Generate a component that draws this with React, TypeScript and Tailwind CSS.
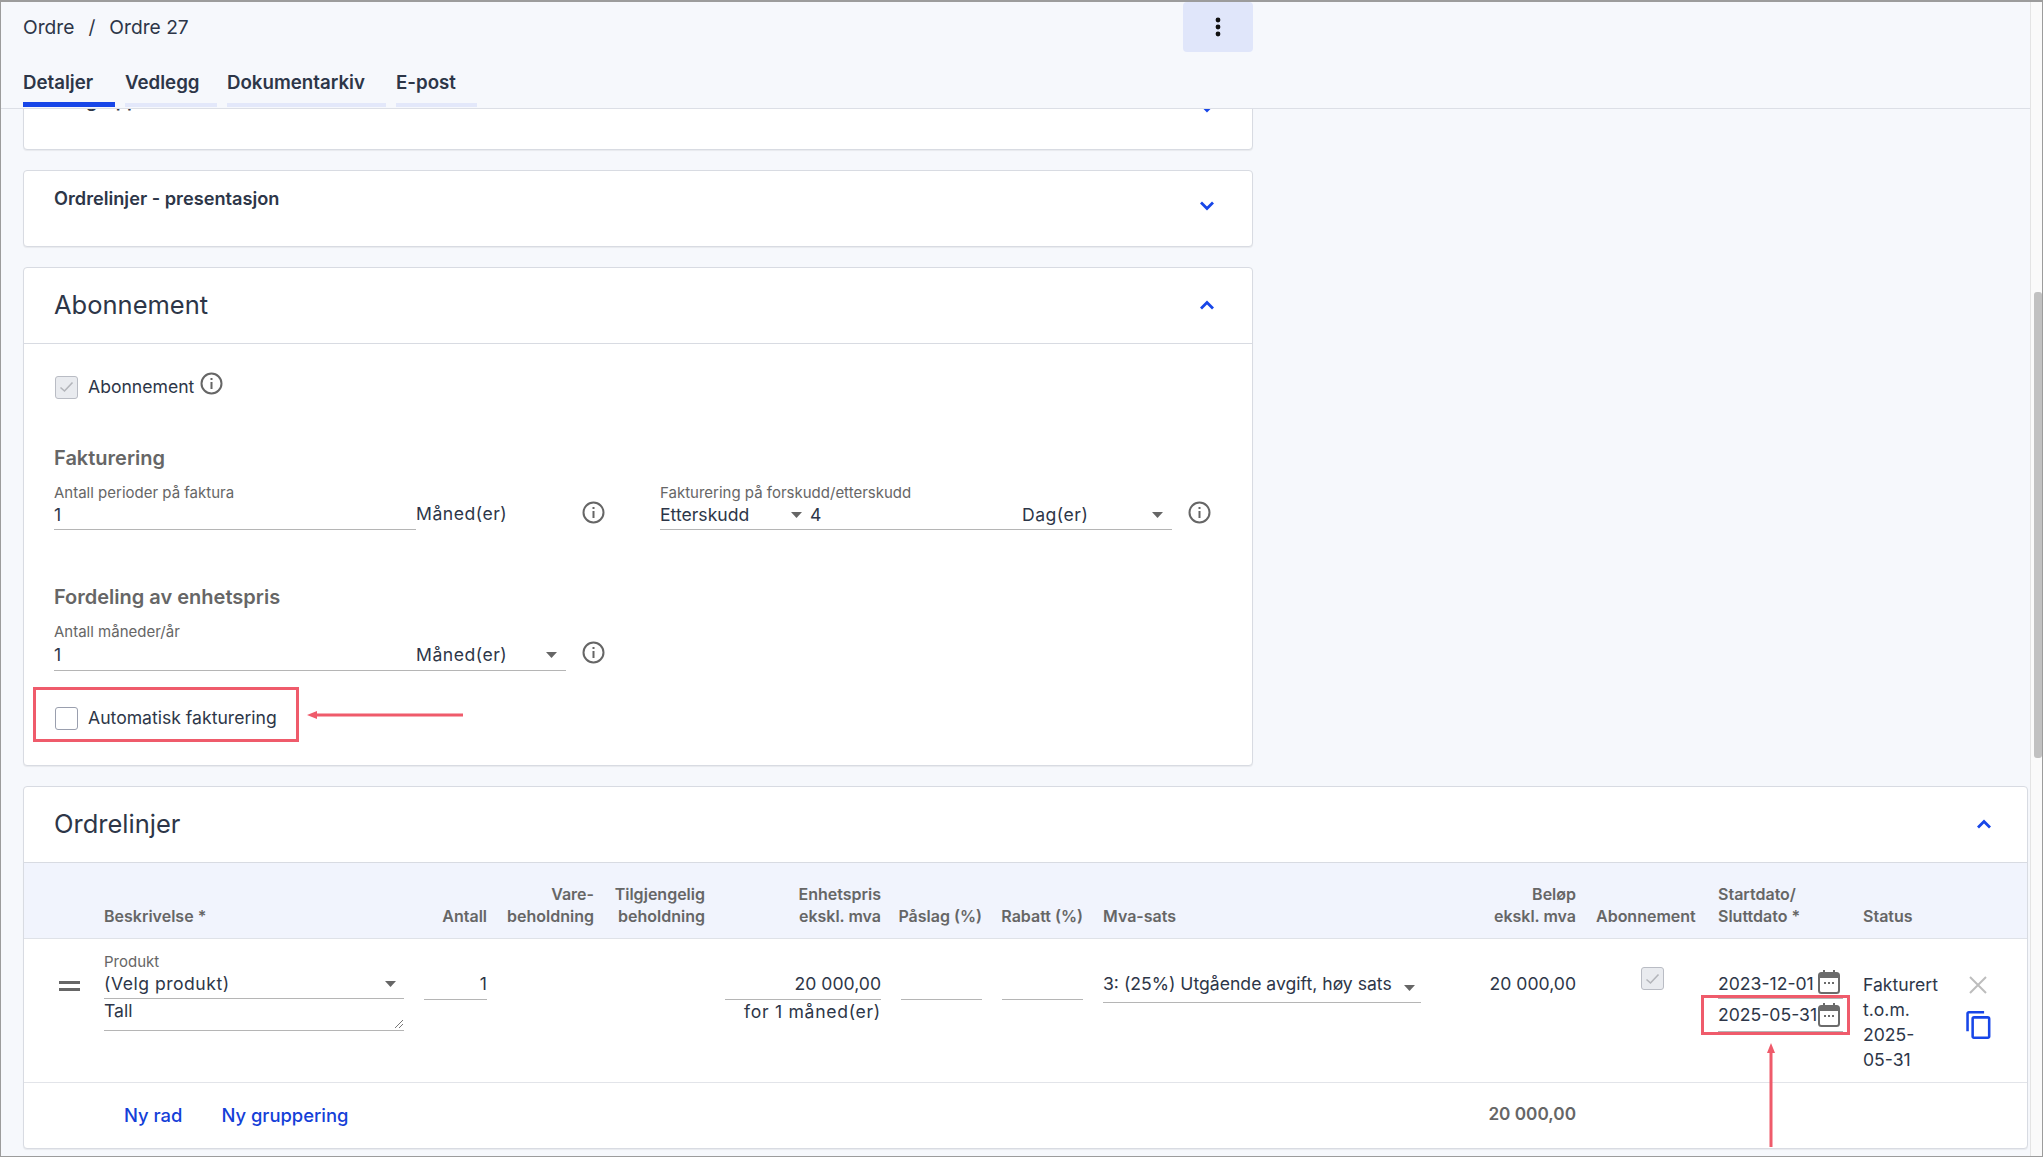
import React from "react";

const GRID = "grid grid-cols-[30px_300px_63px_87px_91px_156px_81px_81px_318px_135px_102px_125px_80px_60px] gap-x-[20px] pl-[30px]";

const Chevron = ({ up = false, cls = "" }: { up?: boolean; cls?: string }) => (
  <svg width="16" height="10" viewBox="0 0 16 10" className={cls} fill="none">
    <path d={up ? "M2 8.5 L8 2.5 L14 8.5" : "M2 1.5 L8 7.5 L14 1.5"} stroke="#1746e8" strokeWidth="2.8" />
  </svg>
);

const Info = () => (
  <svg width="23" height="23" viewBox="0 0 23 23" fill="none" className="shrink-0">
    <circle cx="11.5" cy="11.5" r="10" stroke="#666" strokeWidth="2" />
    <rect x="10.5" y="10" width="2" height="7" fill="#666" />
    <rect x="10.5" y="6" width="2" height="2" fill="#666" />
  </svg>
);

const Caret = ({ cls = "" }: { cls?: string }) => (
  <svg width="11" height="6" viewBox="0 0 11 6" className={`shrink-0 ${cls}`}>
    <path d="M0 0 H11 L5.5 6 Z" fill="#666" />
  </svg>
);

const Check = ({ cls = "" }: { cls?: string }) => (
  <div className={`flex h-[23px] w-[23px] shrink-0 items-center justify-center rounded-[3px] border border-[#b9bcc4] bg-[#e9ebef] ${cls}`}>
    <svg width="15" height="12" viewBox="0 0 15 12" fill="none">
      <path d="M1.5 6.5 L5.5 10 L13.5 1.5" stroke="#b3b5ba" strokeWidth="1.6" />
    </svg>
  </div>
);

const Calendar = () => (
  <svg width="22" height="24" viewBox="0 0 22 24" fill="none" className="shrink-0">
    <rect x="1" y="3" width="20" height="20" rx="2.5" stroke="#6b6b6b" strokeWidth="2" />
    <rect x="1" y="3" width="20" height="5" fill="#6b6b6b" />
    <rect x="5" y="0" width="2" height="4" fill="#6b6b6b" />
    <rect x="15" y="0" width="2" height="4" fill="#6b6b6b" />
    <rect x="6" y="12" width="2" height="2" fill="#6b6b6b" />
    <rect x="10" y="12" width="2" height="2" fill="#6b6b6b" />
    <rect x="14" y="12" width="2" height="2" fill="#6b6b6b" />
  </svg>
);

const Card = ({ children, cls = "" }: { children: React.ReactNode; cls?: string }) => (
  <div className={`rounded-[4px] border border-[#d8dbe2] bg-white shadow-[0_1px_1px_rgba(0,0,0,0.06)] ${cls}`}>{children}</div>
);

const Tab = ({ label, active, w }: { label: string; active?: boolean; w: string }) => (
  <div className={`flex flex-col ${w}`}>
    <span className="h-[28px] text-[18.7px] font-semibold leading-[27px] text-[#2d3648]">{label}</span>
    <div className={active ? "mt-[5px] h-[5px] bg-[#1746e8]" : "mt-[6px] h-[4px] bg-[#e3e8fa]"} />
  </div>
);

const CollapsedCard = ({ label, cls }: { label: string; cls: string }) => (
  <Card cls={`flex items-start justify-between pl-[30px] pr-[37px] ${cls}`}>
    <span className="mt-[16px] text-[18.2px] font-semibold leading-[22px] text-[#2d3648]">{label}</span>
    <Chevron cls="mt-[30px]" />
  </Card>
);

const Th = ({ a, b, right = false }: { a?: string; b: string; right?: boolean }) => (
  <div className={`flex flex-col justify-end whitespace-nowrap text-[16px] font-semibold leading-[22px] text-[#666] ${right ? "items-end" : "items-start"}`}>
    {a && <span>{a}</span>}
    <span>{b}</span>
  </div>
);

export default function App() {
  return (
    <div className="relative flex h-[1157px] w-[2043px] overflow-hidden border border-t-2 border-[#9c9c9c] bg-[#f6f8fc] text-[17.6px] text-[#2d3648] [font-family:Inter,'Noto_Sans',sans-serif]">
      <div className="flex min-w-0 flex-1 flex-col">
        {/* Header */}
        <div className="relative z-10 h-[107px] shrink-0 border-b border-[#dcdfe6] bg-[#f6f8fc] pl-[22px]">
          <div className="flex h-[50px] w-[1230px] items-start justify-between">
            <div className="mt-[12px] flex gap-[14px] text-[19.2px] leading-[27px]">
              <span>Ordre</span><span>/</span><span>Ordre 27</span>
            </div>
            <div className="flex h-[50px] w-[70px] items-center justify-center rounded-[4px] bg-[#e0e6fa]">
              <svg width="6" height="20" viewBox="0 0 6 20"><circle cx="3" cy="3" r="2.4" fill="#111" /><circle cx="3" cy="10" r="2.4" fill="#111" /><circle cx="3" cy="17" r="2.4" fill="#111" /></svg>
            </div>
          </div>
          <div className="mt-[17px] flex gap-[10px]">
            <Tab label="Detaljer" active w="w-[92px]" />
            <Tab label="Vedlegg" w="w-[92px]" />
            <Tab label="Dokumentarkiv" w="w-[159px]" />
            <Tab label="E-post" w="w-[81px]" />
          </div>
        </div>
        {/* Content */}
        <div className="min-h-0 flex-1 overflow-hidden pl-[22px] pr-[1px]">
          <div className="mt-[-37px] flex flex-col gap-[20px]">
            <div className="w-[1230px]"><CollapsedCard label="Målgruppe" cls="h-[78px]" /></div>
            <div className="w-[1230px]"><CollapsedCard label="Ordrelinjer - presentasjon" cls="h-[77px]" /></div>

            <Card cls="w-[1230px]">
              <div className="flex h-[76px] items-center justify-between border-b border-[#d8dbe2] pb-[2px] pl-[30px] pr-[37px]">
                <span className="text-[25.5px] leading-[32px]">Abonnement</span>
                <Chevron up />
              </div>
              <div className="h-[421px] pl-[30px] pt-[31px]">
                <div className="flex h-[24px] items-center">
                  <Check cls="ml-[1px]" />
                  <span className="ml-[10px] leading-[24px]">Abonnement</span>
                  <span className="ml-[6px] -translate-y-[4px]"><Info /></span>
                </div>
                <h3 className="mt-[47px] text-[20px] font-semibold leading-[24px] text-[#666]">Fakturering</h3>
                <div className="mt-[13px] flex">
                  <div className="flex w-[606px]">
                    <div className="w-[362px]">
                      <div className="text-[15px] leading-[20px] text-[#666]">Antall perioder på faktura</div>
                      <div className="h-[27px] border-b border-[#b5b5b5] leading-[24px]">1</div>
                    </div>
                    <div className="mt-[18px] w-[166px] leading-[26px] tracking-[0.5px]">Måned(er)</div>
                    <div className="mt-[18px]"><Info /></div>
                  </div>
                  <div className="w-[512px]">
                    <div className="text-[15px] leading-[20px] text-[#666]">Fakturering på forskudd/etterskudd</div>
                    <div className="flex h-[27px] items-center border-b border-[#b5b5b5] pb-[2px]">
                      <span className="w-[131px] leading-[24px]">Etterskudd</span>
                      <Caret />
                      <span className="ml-[8px] w-[212px] leading-[24px]">4</span>
                      <span className="w-[130px] leading-[24px] tracking-[0.5px]">Dag(er)</span>
                      <Caret />
                    </div>
                  </div>
                  <div className="ml-[16px] mt-[18px]"><Info /></div>
                </div>
                <h3 className="mt-[55px] text-[20px] font-semibold leading-[24px] text-[#666]">Fordeling av enhetspris</h3>
                <div className="mt-[13px] flex">
                  <div className="w-[512px]">
                    <div className="text-[15px] leading-[20px] text-[#666]">Antall måneder/år</div>
                    <div className="flex h-[29px] items-center border-b border-[#b5b5b5] pb-[2px]">
                      <span className="w-[362px] leading-[24px]">1</span>
                      <span className="w-[130px] leading-[24px] tracking-[0.5px]">Måned(er)</span>
                      <Caret />
                    </div>
                  </div>
                  <div className="ml-[16px] mt-[19px]"><Info /></div>
                </div>
                <div className="mt-[35px] flex h-[24px] items-center">
                  <div className="ml-[1px] h-[23px] w-[23px] shrink-0 rounded-[3px] border border-[#9a9fae] bg-white" />
                  <span className="ml-[10px] leading-[22px]">Automatisk fakturering</span>
                </div>
              </div>
            </Card>

            <Card cls="w-[2005px]">
              <div className="flex h-[76px] items-center justify-between border-b border-[#d8dbe2] pb-[1px] pl-[30px] pr-[35px]">
                <span className="text-[25.5px] leading-[32px]">Ordrelinjer</span>
                <Chevron up />
              </div>
              <div className={`${GRID} h-[76px] items-end border-b border-[#dfe2e8] bg-[#f1f4fd] pb-[11px]`}>
                <div />
                <Th b="Beskrivelse *" />
                <Th b="Antall" right />
                <Th a="Vare-" b="beholdning" right />
                <Th a="Tilgjengelig" b="beholdning" right />
                <Th a="Enhetspris" b="ekskl. mva" right />
                <Th b="Påslag (%)" right />
                <Th b="Rabatt (%)" right />
                <Th b="Mva-sats" />
                <Th a="Beløp" b="ekskl. mva" right />
                <Th b="Abonnement" />
                <Th a="Startdato/" b="Sluttdato *" />
                <Th b="Status" />
                <div />
              </div>
              <div className={`${GRID} h-[144px] border-b border-[#e2e4e9]`}>
                <div className="flex pl-[5px] pt-[42px]">
                  <div className="flex h-[10px] w-[21px] flex-col justify-between">
                    <div className="h-[3px] bg-[#666]" /><div className="h-[3px] bg-[#666]" />
                  </div>
                </div>
                <div className="pt-[13px]">
                  <div className="text-[15px] leading-[20px] text-[#666]">Produkt</div>
                  <div className="flex h-[27px] items-center justify-between border-b border-[#b5b5b5] pb-[2px] pr-[8px] leading-[24px] tracking-[0.5px]">
                    <span>(Velg produkt)</span><Caret />
                  </div>
                  <div className="relative h-[32px] border-b border-[#b5b5b5] leading-[24px]">
                    Tall
                    <svg width="10" height="10" viewBox="0 0 10 10" className="absolute bottom-[1px] right-0"><path d="M1 9 L9 1 M5 9 L9 5" stroke="#777" strokeWidth="1" /></svg>
                  </div>
                </div>
                <div className="pt-[33px]"><div className="h-[28px] border-b border-[#b5b5b5] text-right leading-[24px]">1</div></div>
                <div /><div />
                <div className="pt-[33px] text-right">
                  <div className="h-[28px] border-b border-[#b5b5b5] leading-[24px]">20 000,00</div>
                  <div className="whitespace-nowrap leading-[24px] tracking-[0.7px]">for 1 måned(er)</div>
                </div>
                <div className="pt-[33px]"><div className="h-[28px] border-b border-[#b5b5b5]" /></div>
                <div className="pt-[33px]"><div className="h-[28px] border-b border-[#b5b5b5]" /></div>
                <div className="pt-[33px]">
                  <div className="flex h-[31px] items-start justify-between border-b border-[#b5b5b5] pr-[6px] leading-[24px]">
                    <span className="whitespace-nowrap">3: (25%) Utgående avgift, høy sats</span>
                    <Caret cls="mt-[13px]" />
                  </div>
                </div>
                <div className="pt-[33px] text-right leading-[24px]">20 000,00</div>
                <div className="flex pl-[45px] pt-[28px]"><Check /></div>
                <div className="pt-[33px]">
                  <div className="flex h-[27px] items-start justify-between border-b border-[#b5b5b5] pr-[3px] leading-[24px]">
                    <span>2023-12-01</span><span className="-mt-[2px]"><Calendar /></span>
                  </div>
                  <div className="flex h-[33px] items-start justify-between border-b border-[#b5b5b5] pr-[3px] pt-[4px] leading-[24px]">
                    <span>2025-05-31</span><Calendar />
                  </div>
                </div>
                <div className="flex flex-col whitespace-nowrap pt-[33px] leading-[25px]">
                  <span>Fakturert</span><span>t.o.m.</span><span>2025-</span><span>05-31</span>
                </div>
                <div className="flex flex-col items-start pl-[6px] pt-[37px]">
                  <svg width="18" height="18" viewBox="0 0 18 18" fill="none"><path d="M1 1 L17 17 M17 1 L1 17" stroke="#bdbdbd" strokeWidth="2" /></svg>
                  <svg width="28" height="32" viewBox="1 0 22 24" className="-ml-[4px] mt-[15px]"><path fill="#1746e8" d="M16 1H4c-1.1 0-2 .9-2 2v14h2V3h12V1zm3 4H8c-1.1 0-2 .9-2 2v14c0 1.1.9 2 2 2h11c1.1 0 2-.9 2-2V7c0-1.1-.9-2-2-2zm0 16H8V7h11v14z" /></svg>
                </div>
              </div>
              <div className={`${GRID} h-[65px]`}>
                <div className="flex items-center gap-[39px] whitespace-nowrap pl-[20px] text-[18.4px] font-medium text-[#1440d8] [grid-column:2/4]">
                  <span>Ny rad</span><span>Ny gruppering</span>
                </div>
                <div className="flex items-center justify-end pb-[3px] text-[17.2px] font-semibold text-[#666] [grid-column:4/11]">20 000,00</div>
              </div>
            </Card>
          </div>
        </div>
      </div>

      {/* Scrollbar */}
      <div className="relative w-[12px] shrink-0 border-l border-[#e4e4e4] bg-[#fafafa]">
        <div className="absolute left-[3px] top-[290px] h-[466px] w-[8px] rounded-[3px] bg-[#c1c1c1]" />
      </div>

      {/* Annotations */}
      <div className="absolute left-[32px] top-[685px] h-[55px] w-[266px] border-[3px] border-[#ef5b6b]" />
      <div className="absolute left-[1700px] top-[993px] h-[40px] w-[149px] border-[3px] border-[#ef5b6b]" />
      <svg className="absolute left-[306px] top-[706px]" width="158" height="14" viewBox="0 0 158 14">
        <path d="M0 7 L10 3 V11 Z" fill="#ef5b6b" />
        <rect x="8" y="5.5" width="148" height="3" fill="#ef5b6b" />
      </svg>
      <svg className="absolute left-[1763px] top-[1041px]" width="14" height="106" viewBox="0 0 14 106">
        <path d="M7 0 L3 10 H11 Z" fill="#ef5b6b" />
        <rect x="5.5" y="8" width="3" height="96" fill="#ef5b6b" />
      </svg>
    </div>
  );
}
